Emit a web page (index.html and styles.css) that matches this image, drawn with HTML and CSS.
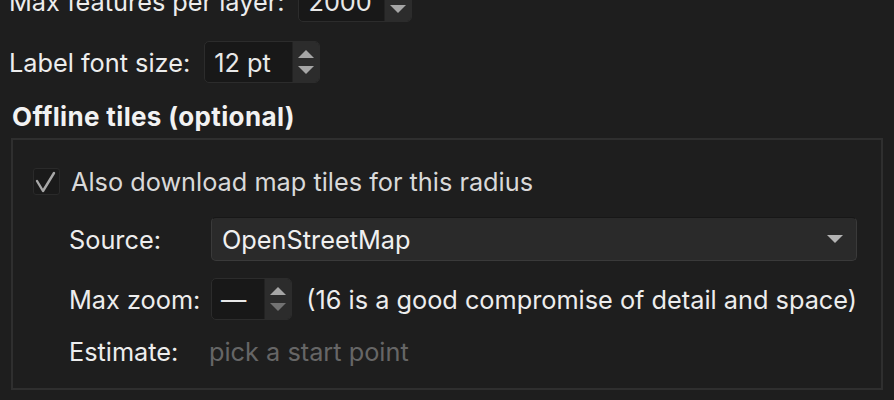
FILE: index.html
```html
<!DOCTYPE html>
<html lang="en">
<head>
    <meta charset="UTF-8">
    <title>Map export settings</title>
    <link rel="stylesheet" href="styles.css">
</head>
<body>

<main class="panel">
    <div class="row row-first">
        <span class="label">Max features per layer:</span>
        <div class="spin spin-wide">
            <span class="spin-value">2000</span>
            <div class="stepper">
                <svg class="arrow" width="16" height="9" viewBox="0 0 16 9"><path d="M0 8 L8 0 L16 8 Z"/></svg>
                <svg class="arrow" width="16" height="9" viewBox="0 0 16 9"><path d="M0 1 L8 9 L16 1 Z"/></svg>
            </div>
        </div>
    </div>

    <div class="row">
        <span class="label">Label font size:</span>
        <div class="spin spin-font">
            <span class="spin-value">12 pt</span>
            <div class="stepper">
                <svg class="arrow" width="16" height="9" viewBox="0 0 16 9"><path d="M0 8 L8 0 L16 8 Z"/></svg>
                <svg class="arrow" width="16" height="9" viewBox="0 0 16 9"><path d="M0 1 L8 9 L16 1 Z"/></svg>
            </div>
        </div>
    </div>

    <h2 class="group-title">Offline tiles (optional)</h2>

    <section class="group">
        <div class="check-row">
            <span class="checkbox">
                <svg width="26" height="26" viewBox="0 0 26 26"><path d="M4 13 L10 23 L21 5"/></svg>
            </span>
            <span class="check-label">Also download map tiles for this radius</span>
        </div>

        <div class="field-row field-source">
            <span class="field-label">Source:</span>
            <div class="combo">
                <span>OpenStreetMap</span>
                <svg class="combo-arrow" width="16" height="8" viewBox="0 0 16 8"><path d="M0 0 L16 0 L8 8 Z"/></svg>
            </div>
        </div>

        <div class="field-row field-zoom">
            <span class="field-label">Max zoom:</span>
            <div class="spin spin-zoom">
                <span class="spin-value">—</span>
                <div class="stepper">
                    <svg class="arrow" width="16" height="9" viewBox="0 0 16 9"><path d="M0 8 L8 0 L16 8 Z"/></svg>
                    <svg class="arrow arrow-off" width="16" height="9" viewBox="0 0 16 9"><path d="M0 1 L8 9 L16 1 Z"/></svg>
                </div>
            </div>
            <span class="hint">(16 is a good compromise of detail and space)</span>
        </div>

        <div class="field-row field-estimate">
            <span class="field-label">Estimate:</span>
            <span class="placeholder">pick a start point</span>
        </div>
    </section>
</main>

</body>
</html>
```

FILE: styles.css
```css
/* Reset */
* {
    margin: 0;
    padding: 0;
    box-sizing: border-box;
}

body {
    font-family: Inter, "Noto Sans", sans-serif;
    font-size: 25.3px;
    background-color: #1e1e1e;
    color: #ededed;
    overflow: hidden;
}

.panel {
    padding: 0 11px 0 9px;
}

/* Top rows with spin boxes */
.row {
    display: flex;
    align-items: center;
    gap: 14px;
    height: 42px;
}

.row-first {
    margin-top: -20px;
    margin-bottom: 19px;
}

.spin {
    display: flex;
    height: 42px;
    background-color: #181818;
    border: 1px solid #2c2c2c;
    border-radius: 5px;
    overflow: hidden;
}

.spin-value {
    flex: 1;
    display: flex;
    align-items: center;
    padding-left: 9px;
    color: #e8e8e8;
}

.spin-wide { width: 114px; }
.spin-font { width: 116px; }
.spin-zoom { width: 83px; }

.stepper {
    width: 27px;
    display: flex;
    flex-direction: column;
    align-items: center;
    justify-content: center;
    gap: 6px;
    background-color: #2c2c2c;
    border-left: 1px solid #222;
}

.arrow path {
    fill: #a6a6a6;
}

.arrow-off path {
    fill: #727272;
}

/* Group box */
.group-title {
    font-size: 26px;
    font-weight: 700;
    letter-spacing: 0.35px;
    color: #f2f2f2;
    margin: 19px 0 0 3px;
    line-height: 30px;
}

.group {
    margin: 6px 0 0 2px;
    height: 252px;
    border: 2px solid #2f2f2f;
    padding: 27px 24px 0 20px;
}

.check-row {
    display: flex;
    align-items: center;
    gap: 11px;
    height: 28px;
}

.checkbox {
    width: 27px;
    height: 27px;
    background-color: #1a1a1a;
    border: 1px solid #2a2a2a;
    border-radius: 3px;
}

.checkbox svg {
    display: block;
    margin: -1px 0 0 -1px;
}

.checkbox path {
    fill: none;
    stroke: #a8a8a8;
    stroke-width: 2.4;
    stroke-linecap: round;
    stroke-linejoin: round;
}

.check-label {
    color: #d9d9d9;
}

.field-row {
    display: flex;
    align-items: center;
    padding-left: 36px;
}

.field-label {
    width: 142px;
    flex-shrink: 0;
}

.field-source {
    margin-top: 22px;
    height: 44px;
}

.combo {
    flex: 1;
    height: 44px;
    display: flex;
    align-items: center;
    justify-content: space-between;
    padding: 0 13px 0 10px;
    background-color: #2a2a2a;
    border: 1px solid #3a3a3a;
    border-top-color: #171717;
    border-radius: 5px;
    color: #f0f0f0;
}

.combo-arrow path {
    fill: #b4b4b4;
}

.field-zoom {
    margin-top: 17px;
    height: 42px;
}

.hint {
    margin-left: 14px;
    white-space: nowrap;
}

.field-estimate {
    margin-top: 10px;
    height: 42px;
}

.placeholder {
    color: #666;
    margin-left: -2px;
}
```
